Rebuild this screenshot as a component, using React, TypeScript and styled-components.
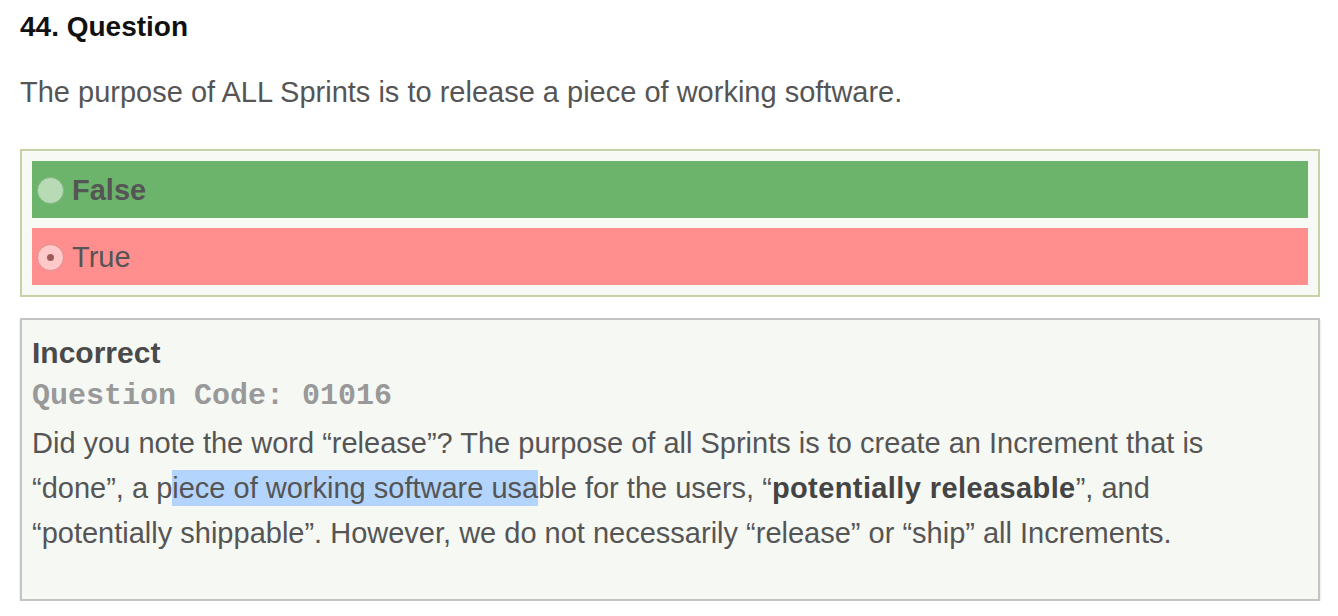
import React from "react";
import styled, { createGlobalStyle } from "styled-components";

const GlobalStyle = createGlobalStyle`
  html, body { margin: 0; padding: 0; background: #ffffff; }
  body { font-family: "Liberation Sans", Arial, Helvetica, sans-serif; }
`;

const Page = styled.div`
  padding: 10px 18px 0 20px;
  width: 1338px;
  box-sizing: border-box;
`;

const Heading = styled.h2`
  margin: 0;
  font-size: 28px;
  line-height: 34px;
  font-weight: 700;
  color: #111;
`;

const Prompt = styled.p`
  margin: 28px 0 37px;
  font-size: 29px;
  line-height: 40px;
  color: #555;
`;

const Options = styled.div`
  display: flex;
  flex-direction: column;
  gap: 10px;
  padding: 10px;
  border: 2px solid #c6d2a3;
  background: #f7f9f4;
`;

const Option = styled.div<{ $tone: "correct" | "wrong" }>`
  display: flex;
  align-items: center;
  gap: 8px;
  height: 57px;
  padding: 2px 0 0 5px;
  box-sizing: border-box;
  background: ${(p) => (p.$tone === "correct" ? "#6cb46b" : "#ff8f8f")};
  font-size: 29px;
  color: #555;
  font-weight: ${(p) => (p.$tone === "correct" ? 700 : 400)};
`;

const Radio = styled.span<{ $tone: "correct" | "wrong"; $checked?: boolean }>`
  position: relative;
  width: 27px;
  height: 27px;
  border-radius: 50%;
  box-sizing: border-box;
  flex: none;
  background: ${(p) => (p.$tone === "correct" ? "#b8dbb5" : "#ffc9c9")};
  border: 1px solid ${(p) => (p.$tone === "correct" ? "#86b984" : "#d99090")};
  &::after {
    content: "";
    display: ${(p) => (p.$checked ? "block" : "none")};
    position: absolute;
    left: 50%;
    top: 50%;
    width: 7px;
    height: 7px;
    margin: -3.5px 0 0 -3.5px;
    border-radius: 50%;
    background: #9b5b5b;
  }
`;

const Feedback = styled.div`
  margin-top: 21px;
  padding: 13px 10px 43px;
  border: 2px solid #c4c4c4;
  background: #f6f8f3;
  box-shadow: 0 2px 2px rgba(0, 0, 0, 0.18);
`;

const Verdict = styled.div`
  font-size: 30px;
  line-height: 40px;
  font-weight: 700;
  color: #4a4a4a;
`;

const Code = styled.div`
  margin-top: 3px;
  font-family: "Liberation Mono", "Courier New", monospace;
  font-size: 30px;
  line-height: 40px;
  font-weight: 700;
  color: #999;
`;

const Explanation = styled.p`
  margin: 5px 0 0;
  font-size: 29px;
  line-height: 45px;
  color: #555;
  white-space: nowrap;
`;

const Strong = styled.strong`
  color: #444;
  letter-spacing: 0.4px;
`;

const Selected = styled.span`
  background: #b3d4fc;
  padding: 2px 0;
`;

export default function App() {
  return (
    <Page>
      <GlobalStyle />
      <Heading>44. Question</Heading>
      <Prompt>The purpose of ALL Sprints is to release a piece of working software.</Prompt>
      <Options>
        <Option $tone="correct">
          <Radio $tone="correct" />
          False
        </Option>
        <Option $tone="wrong">
          <Radio $tone="wrong" $checked />
          True
        </Option>
      </Options>
      <Feedback>
        <Verdict>Incorrect</Verdict>
        <Code>Question Code: 01016</Code>
        <Explanation>
          Did you note the word “release”? The purpose of all Sprints is to create an Increment that is
          <br />
          “done”, a p<Selected>iece of working software usa</Selected>ble for the users, “
          <Strong>potentially releasable</Strong>”, and
          <br />
          “potentially shippable”. However, we do not necessarily “release” or “ship” all Increments.
        </Explanation>
      </Feedback>
    </Page>
  );
}
